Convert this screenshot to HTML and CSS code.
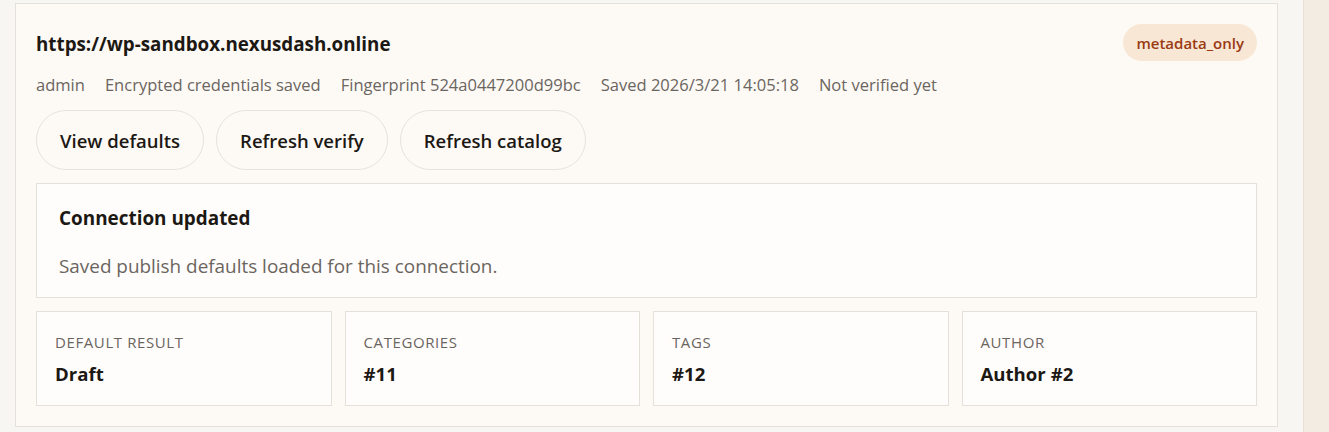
FILE: index.html
```html
<!DOCTYPE html>
<html lang="en">
<head>
<meta charset="utf-8">
<title>Connection</title>
<link rel="stylesheet" href="styles.css">
</head>
<body>
<div class="layout">
  <main class="main">
    <section class="card">
      <div class="card-head">
        <h2 class="site-url">https://wp-sandbox.nexusdash.online</h2>
        <span class="badge">metadata_only</span>
      </div>
      <div class="meta">
        <span>admin</span>
        <span>Encrypted credentials saved</span>
        <span>Fingerprint 524a0447200d99bc</span>
        <span>Saved 2026/3/21 14:05:18</span>
        <span>Not verified yet</span>
      </div>
      <div class="actions">
        <button class="pill">View defaults</button>
        <button class="pill">Refresh verify</button>
        <button class="pill">Refresh catalog</button>
      </div>
      <div class="notice">
        <div class="notice-title">Connection updated</div>
        <div class="notice-body">Saved publish defaults loaded for this connection.</div>
      </div>
      <div class="stats">
        <div class="stat">
          <div class="stat-label">Default result</div>
          <div class="stat-value">Draft</div>
        </div>
        <div class="stat">
          <div class="stat-label">Categories</div>
          <div class="stat-value">#11</div>
        </div>
        <div class="stat">
          <div class="stat-label">Tags</div>
          <div class="stat-value">#12</div>
        </div>
        <div class="stat">
          <div class="stat-label">Author</div>
          <div class="stat-value">Author #2</div>
        </div>
      </div>
    </section>
  </main>
  <aside class="side"></aside>
</div>
</body>
</html>
```
FILE: styles.css
```css
* { box-sizing: border-box; }
html, body { margin: 0; height: 100%; }
body {
  background: #f8f6f2;
  font-family: "Open Sans", "Noto Sans", "Liberation Sans", sans-serif;
  color: #1c1814;
  overflow: hidden;
}
.layout {
  display: flex;
  height: 432px;
}
.main {
  flex: 0 0 1303px;
  padding: 3px 25px 0 15px;
}
.side {
  flex: 1;
  background: #f3ece2;
  border-left: 1px solid #e6e0d7;
}
.card {
  background: #fdfaf6;
  border: 1px solid #e4e0da;
  padding: 20px;
  display: flex;
  flex-direction: column;
}
.card-head {
  display: flex;
  align-items: center;
  justify-content: space-between;
  height: 37px;
}
.site-url {
  margin: 0;
  font-size: 18.8px;
  font-weight: 700;
  line-height: 26px;
  padding-top: 3px;
}
.badge {
  height: 37px;
  padding: 0 13px;
  border-radius: 19px;
  background: #f8e7d4;
  color: #9a3a12;
  font-size: 15px;
  font-weight: 600;
  display: inline-flex;
  align-items: center;
}
.meta {
  margin-top: 12px;
  display: flex;
  gap: 20px;
  font-size: 16.55px;
  line-height: 24px;
  color: #6b6560;
}
.actions {
  margin-top: 13px;
  display: flex;
  gap: 12px;
}
.pill {
  height: 60px;
  padding: 0 23px;
  border-radius: 30px;
  border: 1px solid #e7e2db;
  background: #fdfaf6;
  font-family: inherit;
  font-size: 18.5px;
  font-weight: 600;
  color: #1c1814;
}
.notice {
  margin-top: 13px;
  background: #fffdfb;
  border: 1px solid #e4e0da;
  padding: 22px 22px 19px;
}
.notice-title {
  font-size: 18.9px;
  font-weight: 700;
  line-height: 24px;
}
.notice-body {
  margin-top: 24px;
  font-size: 18.9px;
  line-height: 24px;
  color: #6b6560;
}
.stats {
  margin-top: 13px;
  display: grid;
  grid-template-columns: repeat(4, 1fr);
  gap: 13px;
}
.stat {
  background: #fffdfb;
  border: 1px solid #e4e0da;
  padding: 20px 18px 19px;
}
.stat-label {
  font-size: 15px;
  line-height: 20px;
  text-transform: uppercase;
  letter-spacing: 0.6px;
  color: #6b6560;
}
.stat-value {
  margin-top: 10px;
  font-size: 18.6px;
  font-weight: 700;
  line-height: 24px;
}
```
